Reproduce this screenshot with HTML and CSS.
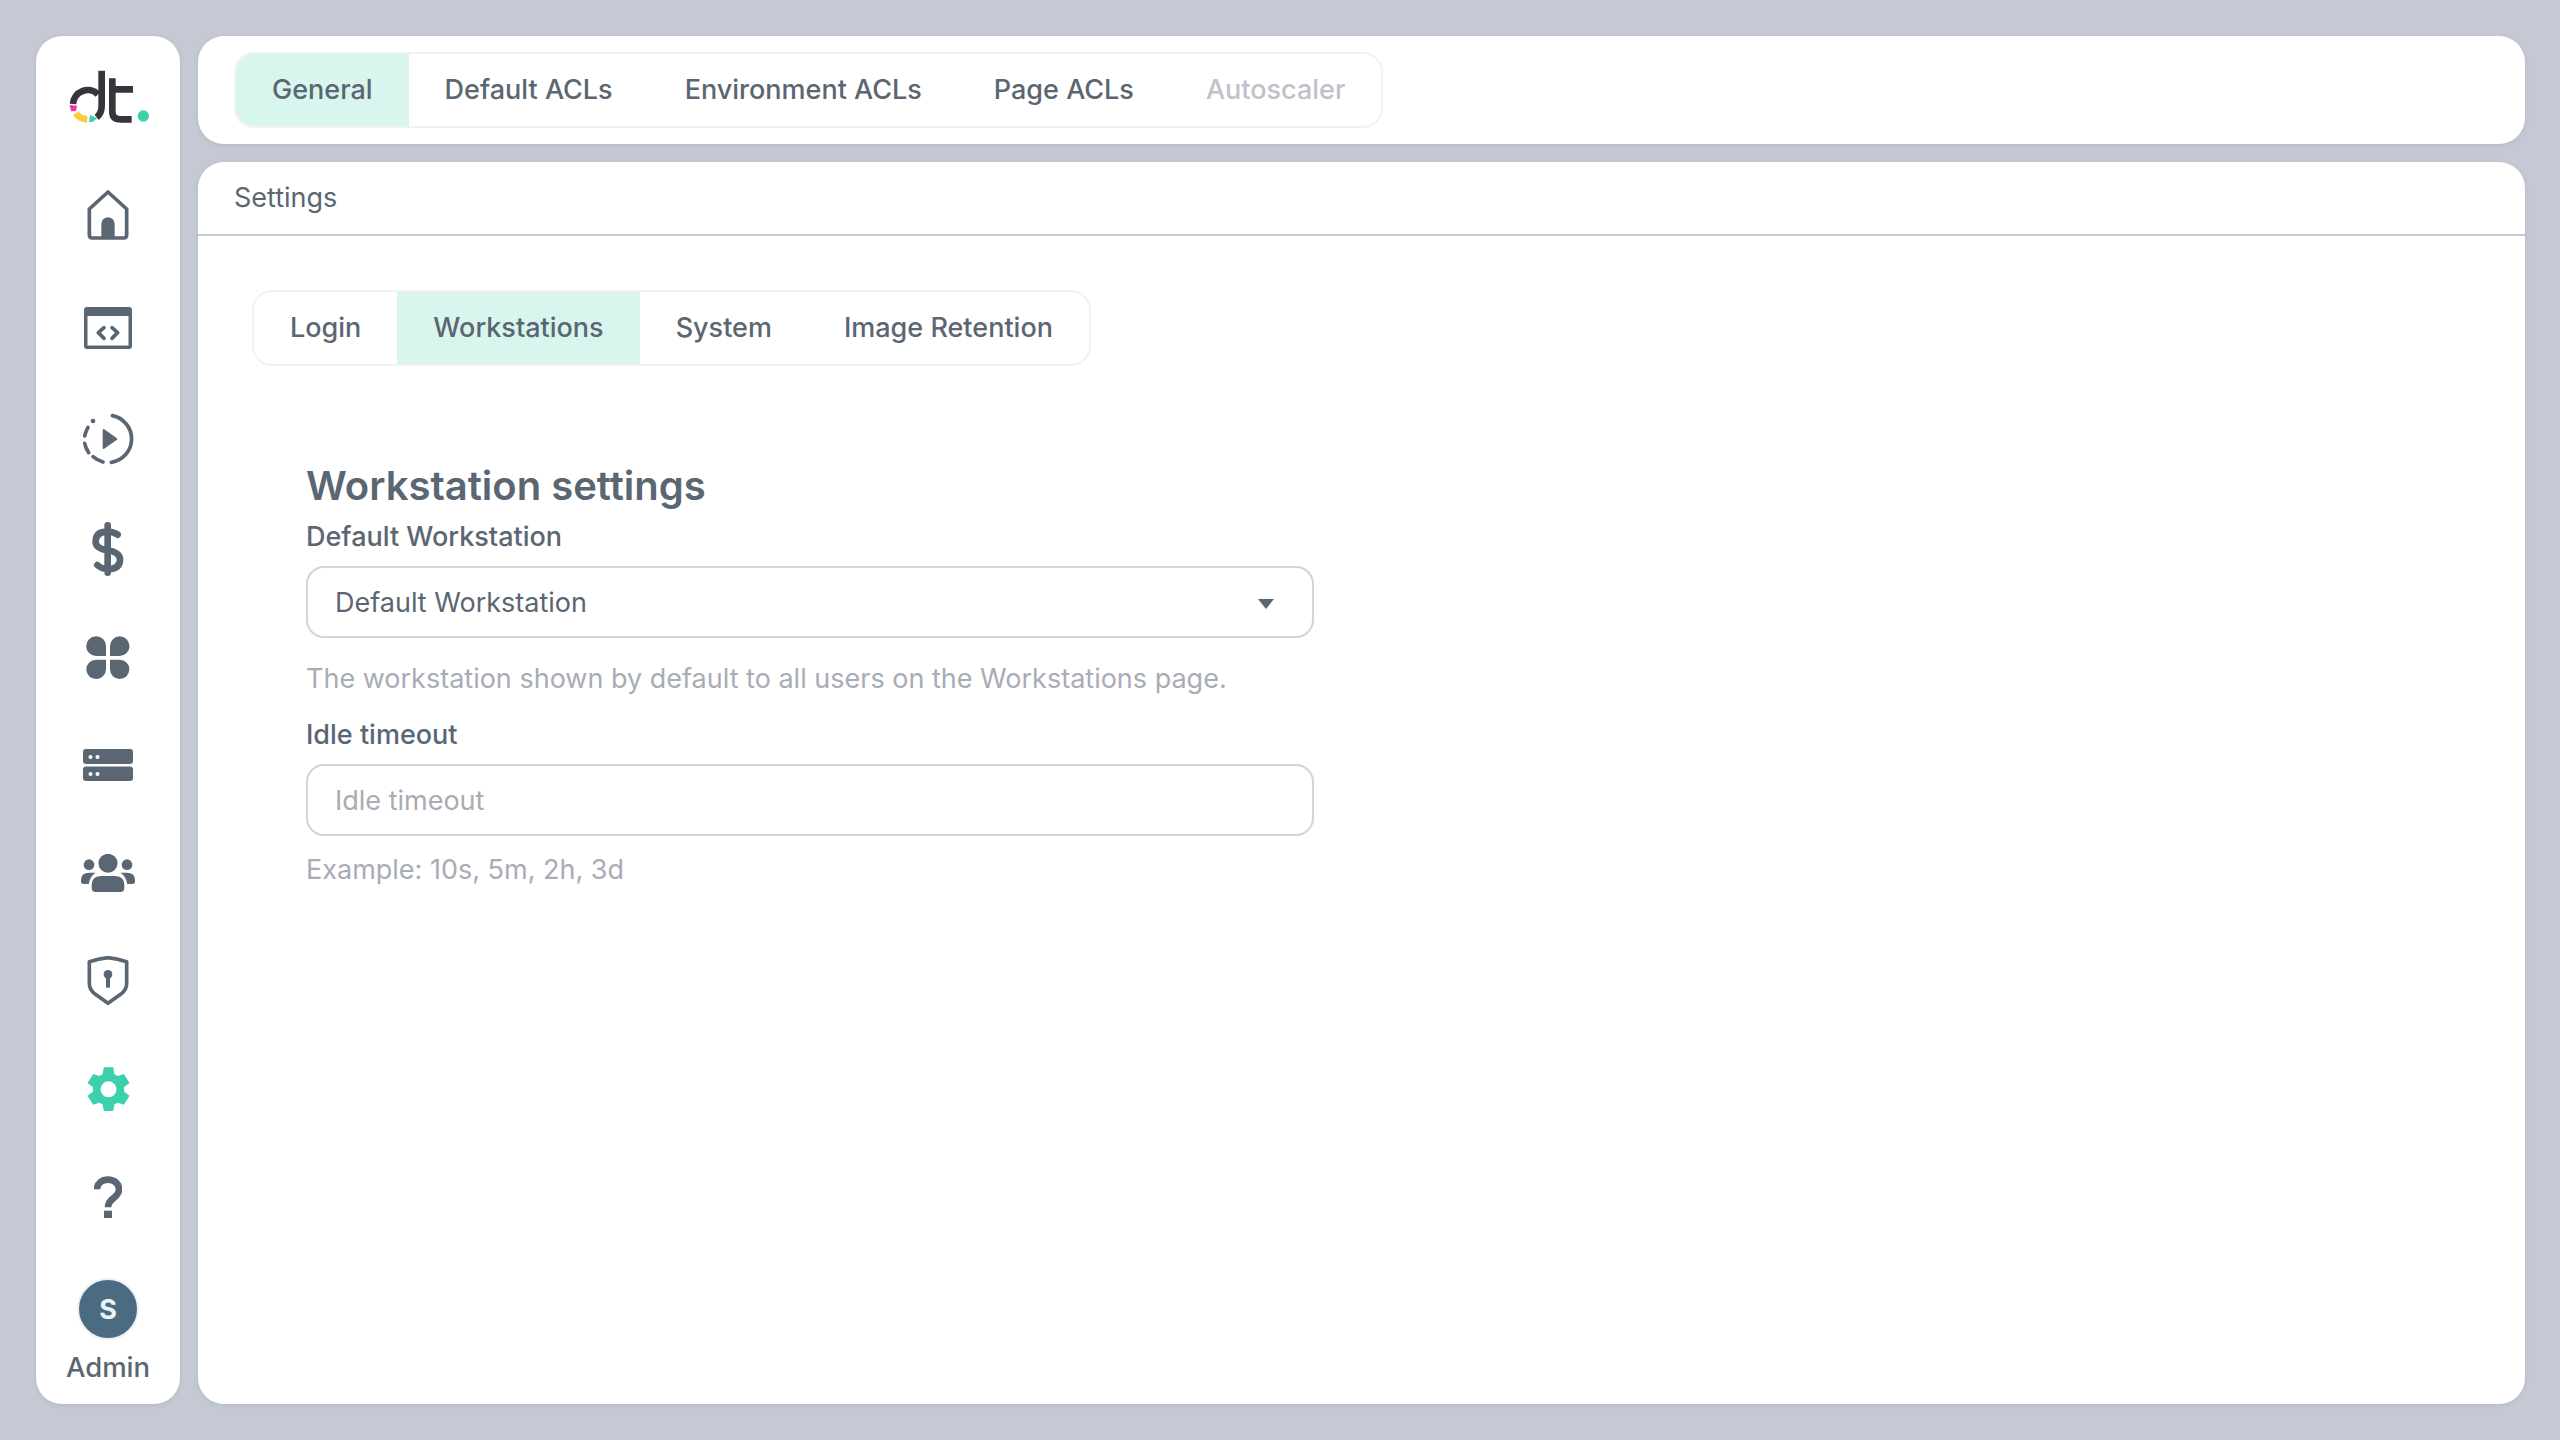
FILE: index.html
```html
<!DOCTYPE html>
<html lang="en">
<head>
    <meta charset="UTF-8">
    <title>Settings</title>
    <link rel="stylesheet" href="styles.css">
</head>
<body>
    <nav class="sidebar">
        <svg class="logo" width="82" height="56" viewBox="120 120 246 168">
            <path class="logo-ink" d="M132 222A44 44 0 0 1 207 193" />
            <path class="logo-ink" d="M218 122V228Q218 250 203 262" />
            <path class="logo-ink" d="M250 145V245Q250 268 275 268H308M240 178H312" />
            <path class="logo-pink" d="M122 225L144 227L141 243L126 244Z" />
            <path class="logo-yellow" d="M140 250A44 44 0 0 0 175 268" />
            <path class="logo-green" d="M183 255L205 265L190 276H180Z" />
            <circle class="logo-dot" cx="343" cy="258" r="17" />
        </svg>
        <ul class="nav-icons">
            <li class="nudge-4"><svg width="42" height="52" viewBox="171 483 126 156"><path class="line" d="M234 489L178 540V618Q178 627 187 627H281Q290 627 290 618V540Z" /><path class="fill" d="M214 627V585A20 20 0 0 1 254 585V627Z" /></svg></li>
            <li class="nudge-3"><svg width="48" height="42" viewBox="162 831 144 126"><rect class="line" x="167" y="836" width="134" height="116" rx="6" /><path class="fill" d="M165 834H303V858H165Z" /><path class="line" d="M222 893L205 908L222 925M246 893L263 908L246 925" /></svg></li>
            <li class="nudge-2"><svg width="52" height="52" viewBox="157 39 156 156"><path class="line" d="M248 47A71 71 0 0 1 245 187" /><path class="line" d="M220 186Q203 181 190 170M177 158Q168 145 165 130M165 108Q168 94 175 82" /><circle class="fill" cx="190" cy="63" r="7" /><path class="fill round" d="M222 90L260 117L222 144Z" /></svg></li>
            <li><svg width="32" height="54" viewBox="187 365 96 162"><path class="line bold" d="M264 403Q250 394 234 394Q198 394 198 424Q198 444 234 450Q271 456 271 478Q271 506 234 506Q215 506 203 494M234 375V517" /></svg></li>
            <li><svg width="44" height="43" viewBox="168 706 132 129"><path class="fill" d="M198 707A29 29 0 0 1 228 736V766H198A29.500 29.500 0 0 1 198 707ZM269 707A29 29 0 0 0 240 736V766H269A29.500 29.500 0 0 0 269 707ZM198 777H228V806A29 29 0 0 1 198 835A29 29 0 0 1 198 777ZM269 777H240V806A29 29 0 0 0 269 835A29 29 0 0 0 269 777Z" /></svg></li>
            <li><svg class="server" width="50" height="32" viewBox="0 0 50 32"><rect class="fill" width="50" height="15" rx="3" /><rect class="fill" y="17.500" width="50" height="14.500" rx="3" /><circle class="hole" cx="7.500" cy="8" r="2" /><circle class="hole" cx="14.500" cy="8" r="2" /><circle class="hole" cx="7.500" cy="25" r="2" /><circle class="hole" cx="14.500" cy="25" r="2" /></svg></li>
            <li><svg width="54" height="38" viewBox="153 252 162 114"><circle class="fill" cx="234" cy="280" r="28.500" /><circle class="fill" cx="177" cy="284" r="16" /><circle class="fill" cx="291" cy="284" r="16" /><path class="fill" d="M185 354V345Q185 318 215 318H253Q283 318 283 345V354Q283 366 271 366H197Q185 366 185 354Z" /><path class="fill" d="M153 335V330Q153 308 178 308H197Q180 318 176 342H160Q153 342 153 335ZM315 335V330Q315 308 290 308H271Q288 318 292 342H308Q315 342 315 335Z" /></svg></li>
            <li><svg width="42" height="50" viewBox="171 558 126 150"><path class="line" d="M234 563Q206 566 178 575V640Q178 660 195 672L234 700L273 672Q290 660 290 640V575Q262 566 234 563Z" /><circle class="fill" cx="234" cy="613" r="13" /><path class="fill" d="M228 613H240V653H228Z" /></svg></li>
            <li><svg class="gear" width="43" height="44" viewBox="170 890 128 132"><path fill-rule="evenodd" d="M220 891H248L252 912L262 917L280 911L297 938L281 950V964L297 976L280 1003L262 997L252 1002L248 1022H220L216 1002L206 997L188 1003L171 976L187 964V950L171 938L188 911L206 917L216 912ZM234 933A24 24 0 1 0 234 981A24 24 0 0 0 234 933Z" /></svg></li>
            <li><svg width="28" height="42" viewBox="192 78 84 126"><path class="line bold flat" d="M201 118C201 100 216 89 234 89C253 89 267 101 267 118C267 146 234 142 234 172" /><rect class="fill" x="222" y="182" width="24" height="22" /></svg></li>
        </ul>
        <div class="user">
            <span class="avatar">S</span>
            <span class="user-name">Admin</span>
        </div>
    </nav>
    <div class="content">
        <header class="topbar">
            <div class="tabs">
                <a class="tab active">General</a>
                <a class="tab">Default ACLs</a>
                <a class="tab">Environment ACLs</a>
                <a class="tab">Page ACLs</a>
                <a class="tab disabled">Autoscaler</a>
            </div>
        </header>
        <main class="panel">
            <div class="panel-title">Settings</div>
            <div class="panel-body">
                <div class="tabs">
                    <a class="tab">Login</a>
                    <a class="tab active">Workstations</a>
                    <a class="tab">System</a>
                    <a class="tab">Image Retention</a>
                </div>
                <form class="settings-form">
                    <h2>Workstation settings</h2>
                    <label>Default Workstation</label>
                    <div class="field select">
                        <span>Default Workstation</span>
                        <i class="caret"></i>
                    </div>
                    <p class="hint">The workstation shown by default to all users on the Workstations page.</p>
                    <label>Idle timeout</label>
                    <div class="field placeholder">Idle timeout</div>
                    <p class="hint">Example: 10s, 5m, 2h, 3d</p>
                </form>
            </div>
        </main>
    </div>
</body>
</html>
```

FILE: styles.css
```css
* {
    box-sizing: border-box;
}
body {
    font-family: Inter, "Noto Sans", sans-serif;
    font-size: 27px;
    color: #5a6672;
    background-color: #c4c9d3;
    margin: 0;
    padding: 36px 35px 36px 36px;
    display: flex;
    gap: 18px;
    height: 1440px;
    overflow: hidden;
}
.sidebar {
    width: 144px;
    flex-shrink: 0;
    background-color: #fff;
    border-radius: 26px;
    box-shadow: 0 1px 4px rgba(60, 70, 90, 0.12);
    display: flex;
    flex-direction: column;
    align-items: center;
    padding-top: 34px;
}
.logo {
    margin-left: 4px;
}
.logo-ink, .logo-yellow {
    fill: none;
    stroke: #37353c;
    stroke-width: 20;
}
.logo-yellow {
    stroke: #fdcb3e;
}
.logo-pink {
    fill: #ee33b4;
}
.logo-green, .logo-dot {
    fill: #3dd0ac;
}
.nav-icons {
    list-style: none;
    margin: 36px 0 0;
    padding: 0;
}
.nav-icons li {
    height: 108px;
    display: flex;
    align-items: center;
    justify-content: center;
}
.nav-icons .nudge-4 {
    margin-bottom: 4px;
}
.nav-icons .nudge-3 {
    margin-bottom: 3px;
}
.nav-icons .nudge-2 {
    margin-bottom: 2px;
}
.line {
    fill: none;
    stroke: #5a6672;
    stroke-width: 11;
    stroke-linecap: round;
    stroke-linejoin: round;
}
.line.bold {
    stroke-width: 20;
}
.line.flat {
    stroke-linecap: butt;
}
.fill {
    fill: #5a6672;
}
.fill.round {
    stroke: #5a6672;
    stroke-width: 6;
    stroke-linejoin: round;
}
.hole {
    fill: #fff;
}
.gear {
    fill: #3dd0ac;
}
.user {
    margin-top: auto;
    padding-bottom: 20px;
    display: flex;
    flex-direction: column;
    align-items: center;
    gap: 10px;
}
.avatar {
    width: 62px;
    height: 62px;
    border: 2px solid #eef0f3;
    border-radius: 50%;
    background-color: #4a6b82;
    color: #eef3f6;
    font-weight: 700;
    font-size: 27px;
    display: flex;
    align-items: center;
    justify-content: center;
}
.user-name {
    font-size: 27.500px;
    font-weight: 500;
}
.content {
    flex: 1;
    display: flex;
    flex-direction: column;
    gap: 18px;
}
.topbar {
    height: 108px;
    background-color: #fff;
    border-radius: 26px;
    box-shadow: 0 1px 4px rgba(60, 70, 90, 0.12);
    padding: 16px 36px;
}
.tabs {
    display: inline-flex;
    height: 76px;
    border: 2px solid #f1f2f4;
    border-radius: 20px;
    overflow: hidden;
}
.tab {
    display: flex;
    align-items: center;
    padding: 0 36px 2px;
    font-weight: 500;
}
.tab.active {
    background-color: #d8f5ee;
}
.tab.disabled {
    color: #bfc2c9;
}
.panel {
    flex: 1;
    background-color: #fff;
    border-radius: 26px;
    box-shadow: 0 1px 4px rgba(60, 70, 90, 0.12);
}
.panel-title {
    height: 74px;
    padding: 0 36px 2px;
    display: flex;
    align-items: center;
    border-bottom: 2px solid #c4c9d3;
}
.panel-body {
    padding: 54px;
}
.settings-form {
    width: 1008px;
    margin: 95px 0 0 54px;
}
h2 {
    font-size: 40px;
    font-weight: 600;
    margin: 0;
}
label {
    display: block;
    margin-top: 10px;
    font-weight: 500;
}
.field {
    height: 72px;
    margin-top: 13px;
    padding: 0 27px;
    border: 2px solid #d0d4de;
    border-radius: 18px;
    display: flex;
    align-items: center;
    justify-content: space-between;
}
.select {
    margin-bottom: 24px;
    padding-right: 38px;
}
.caret {
    width: 0;
    height: 0;
    margin-top: 4px;
    border: 8px solid transparent;
    border-top: 10px solid #5a6672;
    border-bottom: 0;
}
.placeholder, .hint {
    color: #a8acb4;
}
.hint {
    margin: 17px 0 23px;
}
```
